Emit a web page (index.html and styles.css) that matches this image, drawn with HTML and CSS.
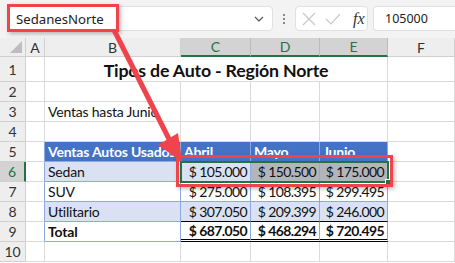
FILE: index.html
```html
<!DOCTYPE html>
<html>
<head>
<meta charset="utf-8">
<link rel="stylesheet" href="styles.css">
</head>
<body>
<div class="page">
  <div class="topbar">
    <div class="namebox">
      <span class="name">SedanesNorte</span>
      <svg class="chev" width="10" height="6" viewBox="0 0 10 6"><path d="M1 1 L5 5 L9 1" fill="none" stroke="#555" stroke-width="1.2"/></svg>
    </div>
    <div class="dots"><i></i><i></i><i></i></div>
    <div class="fxbox">
      <svg width="14" height="14" viewBox="0 0 14 14"><path d="M1 1 L13 13 M13 1 L1 13" stroke="#c8c8c8" stroke-width="1.2" fill="none"/></svg>
      <svg width="16" height="14" viewBox="0 0 16 14"><path d="M1 7 L6 12 L15 2" stroke="#c8c8c8" stroke-width="1.2" fill="none"/></svg>
      <span class="fx">fx</span>
    </div>
    <div class="formula">105000</div>
  </div>

  <div class="sheet">
    <div class="corner"><span class="tri"></span></div>
    <div class="ch">A</div>
    <div class="ch">B</div>
    <div class="ch sel">C</div>
    <div class="ch sel">D</div>
    <div class="ch sel">E</div>
    <div class="ch">F</div>

    <div class="rh">1</div>
    <div class="c"></div>
    <div class="c title">Tipos de Auto - Región Norte</div>
    <div class="c"></div>

    <div class="rh">2</div>
    <div class="c"></div><div class="c"></div><div class="c"></div><div class="c"></div><div class="c"></div><div class="c"></div>

    <div class="rh">3</div>
    <div class="c"></div><div class="c txt">Ventas hasta Junio</div><div class="c"></div><div class="c"></div><div class="c"></div><div class="c"></div>

    <div class="rh">4</div>
    <div class="c"></div><div class="c"></div><div class="c"></div><div class="c"></div><div class="c"></div><div class="c"></div>

    <div class="rh">5</div>
    <div class="c tl"></div>
    <div class="c th">Ventas Autos Usados</div>
    <div class="c th">Abril</div>
    <div class="c th">Mayo</div>
    <div class="c th">Junio</div>
    <div class="c"></div>

    <div class="rh rsel">6</div>
    <div class="c tl"></div>
    <div class="c tb band txt">Sedan</div>
    <div class="c tb band num">$ 105.000</div>
    <div class="c tb band num gray">$ 150.500</div>
    <div class="c tb band num gray">$ 175.000</div>
    <div class="c"></div>

    <div class="rh">7</div>
    <div class="c tl"></div>
    <div class="c tb txt">SUV</div>
    <div class="c tb num">$ 275.000</div>
    <div class="c tb num">$ 108.395</div>
    <div class="c tb num">$ 299.495</div>
    <div class="c"></div>

    <div class="rh">8</div>
    <div class="c tl"></div>
    <div class="c tb band txt">Utilitario</div>
    <div class="c tb band num above">$ 307.050</div>
    <div class="c tb band num above">$ 209.399</div>
    <div class="c tb band num above">$ 246.000</div>
    <div class="c"></div>

    <div class="rh">9</div>
    <div class="c tl"></div>
    <div class="c tb txt bold">Total</div>
    <div class="c tb num bold dbl">$ 687.050</div>
    <div class="c tb num bold dbl">$ 468.294</div>
    <div class="c tb num bold dbl">$ 720.495</div>
    <div class="c"></div>

    <div class="rh">10</div>
    <div class="c"></div><div class="c"></div><div class="c"></div><div class="c"></div><div class="c"></div><div class="c"></div>
  </div>

  <div class="selection"><span class="handle"></span></div>
  <div class="hl hl-name"></div>
  <div class="hl hl-sel"></div>
  <svg class="arrow" width="455" height="263" viewBox="0 0 455 263">
    <line x1="114" y1="30" x2="170" y2="141" stroke="#f0434b" stroke-width="5"/>
    <polygon points="182,162 158,145 178,133" fill="#f0434b"/>
  </svg>
</div>
</body>
</html>
```

FILE: styles.css
```css
* { box-sizing: border-box; }
html, body { margin: 0; padding: 0; }
body {
  width: 455px;
  height: 263px;
  overflow: hidden;
  background: #fff;
  font-family: Lato, "Liberation Sans", sans-serif;
}
.page { position: relative; width: 455px; height: 263px; }

.topbar {
  height: 38px;
  background: #f3f3f3;
  display: flex;
  align-items: flex-start;
  padding: 6px 0 0 8px;
}
.namebox {
  width: 265px;
  height: 25px;
  background: #fff;
  border: 1px solid #e0e0e0;
  border-radius: 4px;
  display: flex;
  align-items: center;
  justify-content: space-between;
  padding: 0 8px 0 7px;
}
.name {
  font-family: "Noto Sans", sans-serif;
  font-size: 13.2px;
  color: #222;
}
.dots {
  width: 22px;
  height: 25px;
  display: flex;
  flex-direction: column;
  align-items: center;
  justify-content: center;
  gap: 2px;
}
.dots i { display: block; width: 2px; height: 2px; background: #888; }
.fxbox {
  width: 73px;
  height: 25px;
  background: #fff;
  border: 1px solid #e0e0e0;
  border-radius: 4px;
  display: flex;
  align-items: center;
  gap: 9px;
  padding-left: 6px;
}
.fx {
  font-family: "Liberation Serif", serif;
  font-style: italic;
  font-size: 16px;
  color: #333;
  margin-left: 3px;
}
.formula {
  margin-left: 5px;
  flex: 1;
  height: 25px;
  background: #fff;
  border: 1px solid #e0e0e0;
  border-right: none;
  border-radius: 4px 0 0 4px;
  font-family: "Noto Sans", sans-serif;
  font-size: 12.5px;
  color: #222;
  padding-left: 11px;
  line-height: 23px;
}

.sheet {
  display: grid;
  grid-template-columns: 26px 19px 136px 70px 69px 68px 67px;
  grid-template-rows: 19px 25px repeat(9, 20px);
}
.corner, .ch, .rh {
  background: #eeeeee;
  border-right: 1px solid #d0d0d0;
  border-bottom: 1px solid #d0d0d0;
  color: #333;
  font-size: 14px;
  display: flex;
  align-items: center;
  justify-content: center;
}
.corner { position: relative; }
.tri {
  position: absolute;
  right: 3px;
  bottom: 3px;
  width: 0; height: 0;
  border-left: 12px solid transparent;
  border-bottom: 12px solid #bdbdbd;
}
.ch.sel {
  background: #d3d3d3;
  color: #217346;
  border-bottom: 2px solid #217346;
  border-right-color: #bcbcbc;
}
.rh.rsel {
  background: #d3d3d3;
  color: #217346;
  border-right: 2px solid #217346;
}
.c {
  border-right: 1px solid #dadada;
  border-bottom: 1px solid #dadada;
  font-size: 14px;
  letter-spacing: -0.2px;
  color: #111;
  display: flex;
  align-items: center;
  white-space: nowrap;
  overflow: visible;
}
.title {
  grid-column: span 4;
  justify-content: center;
  font-weight: 700;
  font-size: 17.8px;
  padding-top: 1px;
}
.txt { padding-left: 3px; }
.tl { border-right-color: #8ea9db; }
.th {
  background: #4472c4;
  color: #fff;
  font-weight: 700;
  padding-left: 3px;
  border-right-color: #8ea9db;
  border-bottom-color: #8ea9db;
}
.tb {
  border-right-color: #8ea9db;
  border-bottom-color: #8ea9db;
}
.band { background: #d9e1f2; }
.num { justify-content: flex-end; padding-right: 3px; letter-spacing: -0.6px; }
.gray { background: #b2b5bc; }
.above { border-bottom-color: #000; }
.bold { font-weight: 700; }
.dbl { border-bottom: 3px double #000; }

.selection {
  position: absolute;
  left: 180px;
  top: 161px;
  width: 209px;
  height: 22px;
  border: 2px solid #217346;
}
.handle {
  position: absolute;
  right: -5px;
  bottom: -5px;
  width: 7px;
  height: 7px;
  background: #217346;
  border: 1px solid #fff;
}
.hl {
  position: absolute;
  border: 3px solid #f0434b;
  box-shadow: 2px 2px 4px rgba(0,0,0,0.25);
}
.hl-name { left: 7px; top: 4px; width: 112px; height: 28px; }
.hl-sel { left: 176px; top: 155px; width: 217px; height: 32px; }
.arrow { position: absolute; left: 0; top: 0; }
```
